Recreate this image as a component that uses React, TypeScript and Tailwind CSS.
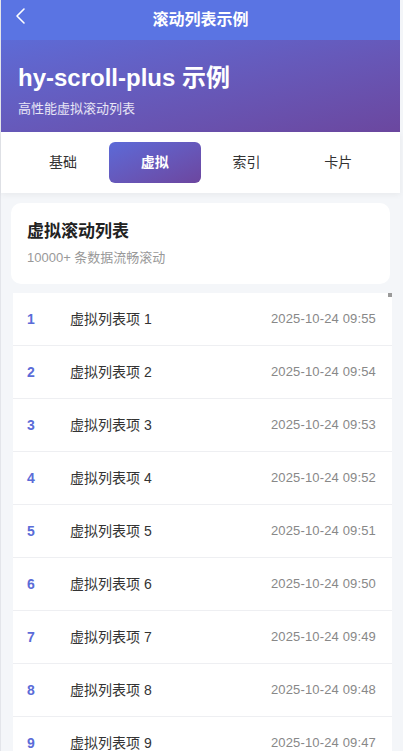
import React, { useState } from 'react';

const TABS = ['基础', '虚拟', '索引', '卡片'];

const ITEMS = Array.from({ length: 10 }, (_, i) => ({
  id: i + 1,
  title: `虚拟列表项 ${i + 1}`,
  time: `2025-10-24 09:${String(55 - i).padStart(2, '0')}`,
}));

export default function App() {
  const [active, setActive] = useState('虚拟');

  return (
    <div
      className="h-[751px] w-[403px] overflow-hidden bg-[#f3f5f8]"
      style={{ fontFamily: '"Liberation Sans", "Noto Sans CJK SC", sans-serif' }}
    >
      <div className="flex h-full w-[400px] flex-col border-l border-[#e3e5ea] bg-[#f4f6f9]">
        {/* Nav bar */}
        <div className="relative flex h-[40px] shrink-0 items-center justify-center bg-[#5a74e3]">
          <svg
            className="absolute left-[13px] top-[7px]"
            width="14"
            height="18"
            viewBox="0 0 14 18"
            fill="none"
            stroke="white"
            strokeWidth="1.6"
            strokeLinecap="round"
            strokeLinejoin="round"
          >
            <path d="M10 2 L3 9 L10 16" />
          </svg>
          <span className="text-[16px] font-bold text-white">滚动列表示例</span>
        </div>

        {/* Hero */}
        <div className="h-[92px] shrink-0 bg-gradient-to-br from-[#5d6bd6] to-[#6b479f] pl-[17px] pt-[23px]">
          <div className="text-[24px] font-bold leading-[30px] text-white">hy-scroll-plus 示例</div>
          <div className="mt-[8px] text-[13px] leading-[16px] text-white/85">高性能虚拟滚动列表</div>
        </div>

        {/* Tabs */}
        <div className="grid h-[61px] shrink-0 grid-cols-4 items-center bg-white px-4 shadow-[0_2px_6px_rgba(0,0,0,0.05)]">
          {TABS.map((tab) => (
            <button
              key={tab}
              onClick={() => setActive(tab)}
              className={`mx-auto flex h-[41px] w-[92px] items-center justify-center rounded-[6px] text-[14px] ${
                active === tab
                  ? 'bg-gradient-to-br from-[#5b6ad8] to-[#6c469f] font-bold text-white'
                  : 'text-[#333]'
              }`}
            >
              {tab}
            </button>
          ))}
        </div>

        {/* Info card */}
        <div className="mx-[10px] mt-[10px] shrink-0 rounded-[10px] bg-white px-[16px] py-[17px]">
          <div className="text-[17px] font-bold leading-[24px] text-[#222]">虚拟滚动列表</div>
          <div className="mt-[5px] text-[13px] leading-[18px] text-[#999]">10000+ 条数据流畅滚动</div>
        </div>

        {/* Virtual list */}
        <div className="relative ml-[12px] mt-[9px] w-[379px] flex-1 overflow-hidden bg-white">
          <div className="absolute right-0 top-0 h-[4px] w-[4px] bg-[#9a9a9a]" />
          {ITEMS.map((item) => (
            <div
              key={item.id}
              className="flex h-[53px] items-center border-b border-[#eeeff2] pl-[14px] pr-[16px]"
            >
              <span className="w-[43px] text-[14px] font-bold text-[#5b6cd8]">{item.id}</span>
              <span className="flex-1 text-[14px] text-[#333]">{item.title}</span>
              <span className="text-[13px] tracking-[0.15px] text-[#888]">{item.time}</span>
            </div>
          ))}
        </div>
      </div>
    </div>
  );
}
